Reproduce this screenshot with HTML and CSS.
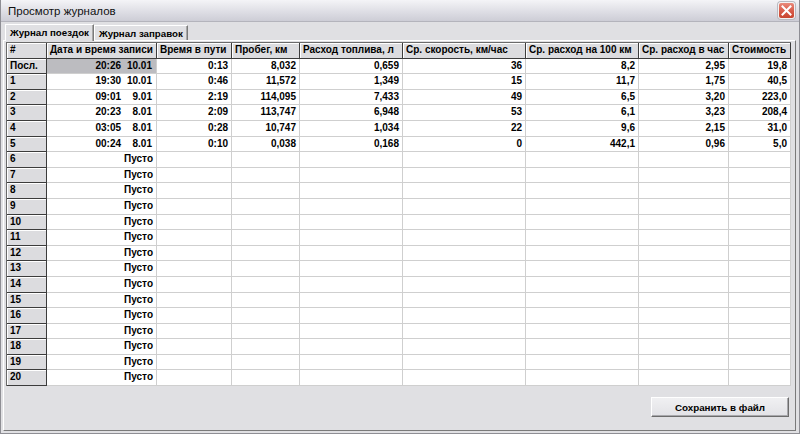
FILE: index.html
```html
<!DOCTYPE html>
<html lang="ru">
<head>
<meta charset="utf-8">
<title>Просмотр журналов</title>
<link rel="stylesheet" href="styles.css">
</head>
<body>
<div class="window">
  <div class="titlebar">
    <span class="title">Просмотр журналов</span>
    <span class="close"><svg width="11" height="11" viewBox="0 0 11 11"><path d="M1.5 1.5 L9.5 9.5 M9.5 1.5 L1.5 9.5" stroke="#fff" stroke-width="2" stroke-linecap="square"/></svg></span>
  </div>
  <div class="tabs">
    <div class="tab active">Журнал поездок</div>
    <div class="tab">Журнал заправок</div>
  </div>
  <div class="panel">
    <div class="grid">
      <div class="row">
        <div class="c h">#</div><div class="c h">Дата и время записи</div><div class="c h">Время в пути</div><div class="c h">Пробег, км</div><div class="c h">Расход топлива, л</div><div class="c h">Ср. скорость, км/час</div><div class="c h">Ср. расход на 100 км</div><div class="c h">Ср. расход в час</div><div class="c h">Стоимость</div>
      </div>
      <div class="row">
        <div class="c h">Посл.</div><div class="c dt sel"><span class="t">20:26</span><span class="d">10.01</span></div><div class="c n">0:13</div><div class="c n">8,032</div><div class="c n">0,659</div><div class="c n">36</div><div class="c n">8,2</div><div class="c n">2,95</div><div class="c n">19,8</div>
      </div>
      <div class="row">
        <div class="c h">1</div><div class="c dt"><span class="t">19:30</span><span class="d">10.01</span></div><div class="c n">0:46</div><div class="c n">11,572</div><div class="c n">1,349</div><div class="c n">15</div><div class="c n">11,7</div><div class="c n">1,75</div><div class="c n">40,5</div>
      </div>
      <div class="row">
        <div class="c h">2</div><div class="c dt"><span class="t">09:01</span><span class="d">9.01</span></div><div class="c n">2:19</div><div class="c n">114,095</div><div class="c n">7,433</div><div class="c n">49</div><div class="c n">6,5</div><div class="c n">3,20</div><div class="c n">223,0</div>
      </div>
      <div class="row">
        <div class="c h">3</div><div class="c dt"><span class="t">20:23</span><span class="d">8.01</span></div><div class="c n">2:09</div><div class="c n">113,747</div><div class="c n">6,948</div><div class="c n">53</div><div class="c n">6,1</div><div class="c n">3,23</div><div class="c n">208,4</div>
      </div>
      <div class="row">
        <div class="c h">4</div><div class="c dt"><span class="t">03:05</span><span class="d">8.01</span></div><div class="c n">0:28</div><div class="c n">10,747</div><div class="c n">1,034</div><div class="c n">22</div><div class="c n">9,6</div><div class="c n">2,15</div><div class="c n">31,0</div>
      </div>
      <div class="row">
        <div class="c h">5</div><div class="c dt"><span class="t">00:24</span><span class="d">8.01</span></div><div class="c n">0:10</div><div class="c n">0,038</div><div class="c n">0,168</div><div class="c n">0</div><div class="c n">442,1</div><div class="c n">0,96</div><div class="c n">5,0</div>
      </div>
      <div class="row"><div class="c h">6</div><div class="c n">Пусто</div><div class="c"></div><div class="c"></div><div class="c"></div><div class="c"></div><div class="c"></div><div class="c"></div><div class="c"></div></div>
      <div class="row"><div class="c h">7</div><div class="c n">Пусто</div><div class="c"></div><div class="c"></div><div class="c"></div><div class="c"></div><div class="c"></div><div class="c"></div><div class="c"></div></div>
      <div class="row"><div class="c h">8</div><div class="c n">Пусто</div><div class="c"></div><div class="c"></div><div class="c"></div><div class="c"></div><div class="c"></div><div class="c"></div><div class="c"></div></div>
      <div class="row"><div class="c h">9</div><div class="c n">Пусто</div><div class="c"></div><div class="c"></div><div class="c"></div><div class="c"></div><div class="c"></div><div class="c"></div><div class="c"></div></div>
      <div class="row"><div class="c h">10</div><div class="c n">Пусто</div><div class="c"></div><div class="c"></div><div class="c"></div><div class="c"></div><div class="c"></div><div class="c"></div><div class="c"></div></div>
      <div class="row"><div class="c h">11</div><div class="c n">Пусто</div><div class="c"></div><div class="c"></div><div class="c"></div><div class="c"></div><div class="c"></div><div class="c"></div><div class="c"></div></div>
      <div class="row"><div class="c h">12</div><div class="c n">Пусто</div><div class="c"></div><div class="c"></div><div class="c"></div><div class="c"></div><div class="c"></div><div class="c"></div><div class="c"></div></div>
      <div class="row"><div class="c h">13</div><div class="c n">Пусто</div><div class="c"></div><div class="c"></div><div class="c"></div><div class="c"></div><div class="c"></div><div class="c"></div><div class="c"></div></div>
      <div class="row"><div class="c h">14</div><div class="c n">Пусто</div><div class="c"></div><div class="c"></div><div class="c"></div><div class="c"></div><div class="c"></div><div class="c"></div><div class="c"></div></div>
      <div class="row"><div class="c h">15</div><div class="c n">Пусто</div><div class="c"></div><div class="c"></div><div class="c"></div><div class="c"></div><div class="c"></div><div class="c"></div><div class="c"></div></div>
      <div class="row"><div class="c h">16</div><div class="c n">Пусто</div><div class="c"></div><div class="c"></div><div class="c"></div><div class="c"></div><div class="c"></div><div class="c"></div><div class="c"></div></div>
      <div class="row"><div class="c h">17</div><div class="c n">Пусто</div><div class="c"></div><div class="c"></div><div class="c"></div><div class="c"></div><div class="c"></div><div class="c"></div><div class="c"></div></div>
      <div class="row"><div class="c h">18</div><div class="c n">Пусто</div><div class="c"></div><div class="c"></div><div class="c"></div><div class="c"></div><div class="c"></div><div class="c"></div><div class="c"></div></div>
      <div class="row"><div class="c h">19</div><div class="c n">Пусто</div><div class="c"></div><div class="c"></div><div class="c"></div><div class="c"></div><div class="c"></div><div class="c"></div><div class="c"></div></div>
      <div class="row"><div class="c h">20</div><div class="c n">Пусто</div><div class="c"></div><div class="c"></div><div class="c"></div><div class="c"></div><div class="c"></div><div class="c"></div><div class="c"></div></div>
    </div>
    <div class="footer">
      <button class="btn" type="button">Сохранить в файл</button>
    </div>
  </div>
</div>
</body>
</html>
```
FILE: styles.css
```css
html, body {
  margin: 0;
  padding: 0;
  background: #e0e0e3;
}
.window {
  width: 800px;
  height: 434px;
  box-sizing: border-box;
  display: flex;
  flex-direction: column;
  background: #e0e0e3;
  border-left: 1px solid #8e8e94;
  border-right: 1px solid #8e8e94;
  border-bottom: 1px solid #8e8e94;
  font-family: "Liberation Sans", Arial, sans-serif;
  color: #000;
}
.titlebar {
  height: 22px;
  flex: none;
  display: flex;
  align-items: center;
  justify-content: space-between;
  padding: 0 4px 0 7px;
  background: linear-gradient(to bottom, #f4f4f7 0%, #e2e2e8 45%, #cdcdd6 100%);
  border-bottom: 1px solid #b4b4bc;
  box-sizing: border-box;
}
.title {
  font-size: 11.5px;
  color: #111;
}
.close {
  width: 17px;
  height: 17px;
  box-sizing: border-box;
  border-radius: 3px;
  border: 1px solid #f2f2f2;
  background: linear-gradient(to bottom, #e98a7c 0%, #d75a48 55%, #c8452f 100%);
  display: flex;
  align-items: center;
  justify-content: center;
  box-shadow: 0 0 0 1px #b9b9c0;
}
.tabs {
  height: 18px;
  flex: none;
  display: flex;
  align-items: flex-end;
  padding-left: 4px;
}
.tab {
  height: 15px;
  box-sizing: border-box;
  padding: 1px 4px 0 4px;
  font-size: 9.7px;
  font-weight: bold;
  line-height: 13px;
  border-top: 1px solid #ffffff;
  border-left: 1px solid #ffffff;
  border-right: 1px solid #7a7a7a;
  box-shadow: inset -1px 0 0 #a8a8a8;
}
.tab.active {
  height: 17px;
  padding: 1px 4px 0 4px;
  line-height: 14px;
  margin-bottom: -1px;
  position: relative;
  background: #e0e0e3;
  z-index: 1;
}
.panel {
  flex: 1;
  display: flex;
  flex-direction: column;
  margin: 0 3px 2px 2px;
  border-top: 1px solid #ffffff;
  border-left: 1px solid #ffffff;
  border-right: 1px solid #7a7a7a;
  border-bottom: 1px solid #7a7a7a;
  padding: 1px 0 0 2px;
}
.grid {
  display: grid;
  grid-template-columns: 40px 110px 75px 68px 103px 123px 113px 90px 62px;
  grid-auto-rows: 15.6px;
  width: 784px;
  border-top: 1px solid #6a6a6a;
  border-left: 1px solid #6a6a6a;
  background: #fff;
  font-size: 10px;
  font-weight: bold;
}
.row {
  display: contents;
}
.c {
  box-sizing: border-box;
  border-right: 1px solid #cfcfcf;
  border-bottom: 1px solid #cfcfcf;
  padding: 0 3px 0 2px;
  line-height: 14.6px;
  white-space: nowrap;
  overflow: hidden;
  background: #fff;
}
.c.h {
  background: #dcdcdf;
  border-right: 1px solid #3c3c3c;
  border-bottom: 1px solid #3c3c3c;
  box-shadow: inset 1px 1px 0 #ffffff;
  padding-left: 3px;
}
.c.n {
  text-align: right;
}
.c.dt {
  display: flex;
  justify-content: flex-end;
  padding-right: 4px;
}
.c.sel {
  background: #bcbcc0;
}
.dt .t {
  margin-right: 5px;
}
.dt .d {
  width: 26px;
  text-align: right;
}
.footer {
  flex: 1;
  display: flex;
  justify-content: flex-end;
  align-items: flex-start;
  padding: 11px 6px 0 0;
}
.btn {
  width: 138px;
  height: 20px;
  padding: 0;
  font-family: "Liberation Sans", Arial, sans-serif;
  font-size: 9.8px;
  font-weight: bold;
  color: #000;
  background: linear-gradient(to bottom, #f0f0f2 0%, #e2e2e6 100%);
  border-top: 1px solid #ffffff;
  border-left: 1px solid #ffffff;
  border-right: 1px solid #6c6c6c;
  border-bottom: 1px solid #6c6c6c;
  box-shadow: inset -1px -1px 0 #a8a8ac;
}
```
